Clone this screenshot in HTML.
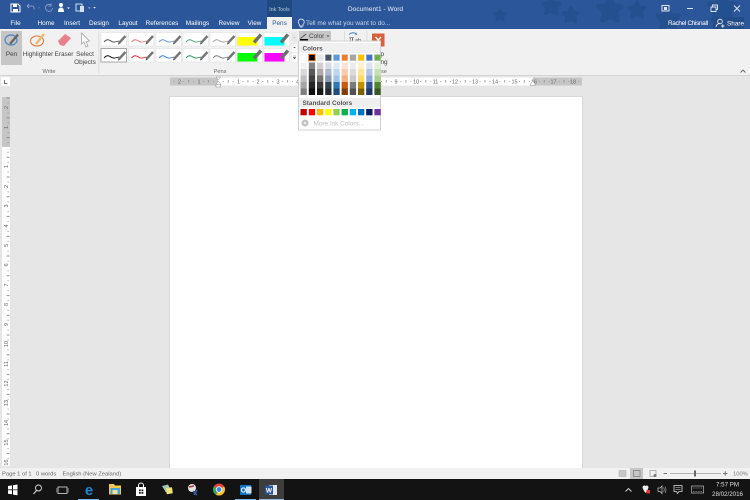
<!DOCTYPE html>
<html><head><meta charset="utf-8"><title>Document1 - Word</title>
<style>
html,body{margin:0;padding:0;width:750px;height:500px;overflow:hidden;background:#e6e6e6}
svg{display:block;position:absolute;left:0;top:0;filter:blur(.35px)}
text{font-family:"Liberation Sans",sans-serif;font-size:6.4px;fill:#444}
.w text,text.w{fill:#fff}
.c{text-anchor:middle}
.r text{font-size:5.5px;fill:#666;text-anchor:middle}
</style></head><body>
<svg width="750" height="500" viewBox="0 0 750 500" xmlns="http://www.w3.org/2000/svg">
<defs>
<g id="nib"><path d="M18 10.5L24.5 3.5" stroke="#767676" stroke-width="2.4" fill="none"/><path d="M17 12l.6-2 1.3 1.2z" fill="#444"/></g>
<path id="wave" d="M3 9.5q3-3.5 6-1.500t5 1.500 4-1" fill="none" stroke-width=".9"/>
<pattern id="ticks" x="218" y="77" width="19.75" height="9" patternUnits="userSpaceOnUse">
<rect x="4.9" y="4" width=".8" height=".9" fill="#888"/><rect x="9.8" y="3" width=".8" height="2.6" fill="#888"/><rect x="14.8" y="4" width=".8" height=".9" fill="#888"/>
</pattern>
<pattern id="vticks" x="2" y="147" width="8" height="19.75" patternUnits="userSpaceOnUse">
<rect x="5.6" y="4.9" width="1" height=".9" fill="#888"/><rect x="4.6" y="9.8" width="3" height=".9" fill="#888"/><rect x="5.6" y="14.8" width="1" height=".9" fill="#888"/>
</pattern>
<path id="star" d="M0-10L3-3.5 10-3 5 2 6.500 9 0 5.500-6.500 9-5 2-10-3-3-3.500Z" fill="#24508f" stroke="#24508f" stroke-width="4" stroke-linejoin="round"/>
</defs>

<!-- title bar -->
<rect width="750" height="29" fill="#2b579a"/>
<use href="#star" transform="translate(500 15) scale(.55)"/>
<use href="#star" transform="translate(551 6) scale(.85)"/>
<use href="#star" transform="translate(571 15) scale(.75)"/>
<use href="#star" transform="translate(610 10) scale(1.15)"/>
<use href="#star" transform="translate(637 10) scale(.8)"/>
<use href="#star" transform="translate(668 19) scale(1.05)"/>
<use href="#star" transform="translate(722 8) scale(1.3)"/>
<rect x="267" y="0" width="25" height="17" fill="#1f4a80"/>
<text x="279.500" y="11" class="c" style="font-size:5.2px;fill:#b9c9de">Ink Tools</text>
<!-- QAT -->
<path d="M11 4h7l2 2v6h-9z" fill="none" stroke="#fff" stroke-width="1"/><rect x="13" y="4.500" width="4" height="2.500" fill="#fff"/><rect x="13" y="9" width="5" height="3" fill="#fff"/>
<path d="M27 6l2-2M27 6l2 2M27 6h5q2.500 0 2 3.500" fill="none" stroke="#7f9ac3" stroke-width="1"/>
<path d="M38 7.500h2l-1 1z" fill="#7f9ac3"/>
<path d="M51 5a3.500 3.500 0 1 0 1.500 3M51 3.500v2.500h-2.500" fill="none" stroke="#7f9ac3" stroke-width="1"/>
<circle cx="61" cy="5" r="2" fill="#fff"/><path d="M58 12q0-4.500 3-4.500t3 4.500z" fill="#fff"/><path d="M67 7.500h3l-1.500 1.500z" fill="#fff"/>
<rect x="76" y="4" width="6" height="7" fill="none" stroke="#d7e0ee"/><rect x="80" y="6" width="4" height="6" fill="#d7e0ee"/><path d="M88 7.500h2.500l-1.200 1.200z" fill="#d7e0ee"/>
<path d="M93 7h3l-1.500 1.500z" fill="#d7e0ee"/>
<text x="375.500" y="11" class="c" style="font-size:6.600px;fill:#e8eef6">Document1 - Word</text>
<!-- window buttons -->
<rect x="662" y="5.500" width="7" height="5.500" fill="none" stroke="#dfe6f0"/><rect x="664" y="7" width="3" height="3" fill="#dfe6f0"/>
<rect x="687" y="8" width="6" height="1" fill="#dfe6f0"/>
<path d="M711 7h5v4.500h-5zM712.500 6.500v-1.500h5v4.500h-1.500" fill="none" stroke="#dfe6f0" stroke-width=".9"/>
<path d="M734 5.500l6 6M740 5.500l-6 6" stroke="#dfe6f0" stroke-width=".9"/>
<!-- tabs -->
<g class="w">
<text x="15.500" y="25.200" class="c">File</text>
<text x="46" y="25.200" class="c">Home</text>
<text x="72" y="25.200" class="c">Insert</text>
<text x="99" y="25.200" class="c">Design</text>
<text x="128" y="25.200" class="c">Layout</text>
<text x="162" y="25.200" class="c">References</text>
<text x="197.500" y="25.200" class="c">Mailings</text>
<text x="229" y="25.200" class="c">Review</text>
<text x="254.500" y="25.200" class="c">View</text>
<text x="306" y="25.200" style="fill:#c7d4e6">Tell me what you want to do...</text>
<text x="668" y="25.200" textLength="40">Rachel Chisnall</text>
</g>
<rect x="267" y="17" width="25" height="12" fill="#f1f1f1"/>
<text x="279.500" y="25.200" class="c" style="fill:#2b579a">Pens</text>
<path d="M299.500 24.500a3 3 0 1 1 3.500 0v1.500h-3.500zM300 27h2.500" fill="none" stroke="#e2e9f3" stroke-width=".8"/>
<rect x="713" y="17" width="31" height="12" fill="#234c88"/>
<circle cx="720" cy="21.500" r="2.300" fill="none" stroke="#fff" stroke-width=".8"/><path d="M716 27q.5-3.500 4-3.500M721 26h3.500M722.800 24.300v3.500" fill="none" stroke="#fff" stroke-width=".8"/>
<text x="727" y="25.500" class="w">Share</text>

<!-- ribbon -->
<rect y="29" width="750" height="46" fill="#f1f1f1"/>
<rect y="75" width="750" height="1" fill="#d4d4d4"/>
<rect x="1" y="31" width="21" height="34" fill="#c6c6c6"/>
<ellipse cx="11" cy="40" rx="6" ry="5" fill="none" stroke="#4f83bd" stroke-width="1.200"/>
<path d="M10 44L18 34.500" stroke="#666" stroke-width="2.400"/>
<text x="11.500" y="56" class="c">Pen</text>
<ellipse cx="37" cy="41" rx="6.500" ry="5" fill="none" stroke="#e5763c" stroke-width="1.100"/>
<path d="M36 44L44 34" stroke="#f0b878" stroke-width="2.600"/>
<text x="38" y="56" class="c">Highlighter</text>
<path d="M58 41l7-7 6 4-7 8-4-1z" fill="#ea7f8e"/><path d="M59 34h.1" stroke="#f3c766" stroke-width="2.500"/>
<text x="64" y="56" class="c">Eraser</text>
<path d="M81.500 33L81.500 44l2.500-2 2 5 2-1-2-4.500 3.500-.5z" fill="#fff" stroke="#9a9a9a" stroke-width=".7"/>
<text x="85" y="56" class="c">Select</text>
<text x="85" y="64" class="c">Objects</text>
<text x="49" y="73" class="c" style="font-size:5.600px;fill:#666">Write</text>
<rect x="98.500" y="31" width=".8" height="42" fill="#d8d8d8"/>
<text x="220" y="73" class="c" style="font-size:5.600px;fill:#666">Pens</text>

<!-- pen gallery -->
<g transform="translate(101 32.500)"><rect width="25.500" height="13.500" fill="#fff" stroke="#e2e2e2" stroke-width=".6"/><use href="#wave" stroke="#444"/><use href="#nib"/></g>
<g transform="translate(128.500 32.500)"><rect width="25.500" height="13.500" fill="#fff" stroke="#e2e2e2" stroke-width=".6"/><use href="#wave" stroke="#ec6f73"/><use href="#nib"/></g>
<g transform="translate(156 32.500)"><rect width="25.500" height="13.500" fill="#fff" stroke="#e2e2e2" stroke-width=".6"/><use href="#wave" stroke="#5c94d6"/><use href="#nib"/></g>
<g transform="translate(183 32.500)"><rect width="25.500" height="13.500" fill="#fff" stroke="#e2e2e2" stroke-width=".6"/><use href="#wave" stroke="#4ca172"/><use href="#nib"/></g>
<g transform="translate(210 32.500)"><rect width="25.500" height="13.500" fill="#fff" stroke="#e2e2e2" stroke-width=".6"/><use href="#wave" stroke="#a0a0a0"/><use href="#nib"/></g>
<g transform="translate(237 32.500)"><rect width="25.500" height="13.500" fill="#fff" stroke="#e2e2e2" stroke-width=".6"/><rect x="0.500" y="4.500" width="20" height="8.500" fill="#ffff00"/><path d="M17 10L24 2" stroke="#6e6e6e" stroke-width="3.400"/></g>
<g transform="translate(264 32.500)"><rect width="25.500" height="13.500" fill="#fff" stroke="#e2e2e2" stroke-width=".6"/><rect x="0.500" y="4.500" width="20" height="8.500" fill="#00ffff"/><path d="M17 10L24 2" stroke="#6e6e6e" stroke-width="3.400"/></g>

<g transform="translate(101 48.500)"><rect width="25.500" height="13.500" fill="#fff" stroke="#a8a8a8" stroke-width="1"/><use href="#wave" stroke="#000" stroke-width="1.200"/><use href="#nib"/></g>
<g transform="translate(128.500 48.500)"><rect width="25.500" height="13.500" fill="#fff" stroke="#e2e2e2" stroke-width=".6"/><use href="#wave" stroke="#e8222c" stroke-width="1.200"/><use href="#nib"/></g>
<g transform="translate(156 48.500)"><rect width="25.500" height="13.500" fill="#fff" stroke="#e2e2e2" stroke-width=".6"/><use href="#wave" stroke="#3a78cc" stroke-width="1.200"/><use href="#nib"/></g>
<g transform="translate(183 48.500)"><rect width="25.500" height="13.500" fill="#fff" stroke="#e2e2e2" stroke-width=".6"/><use href="#wave" stroke="#1b8a4c" stroke-width="1.200"/><use href="#nib"/></g>
<g transform="translate(210 48.500)"><rect width="25.500" height="13.500" fill="#fff" stroke="#e2e2e2" stroke-width=".6"/><use href="#wave" stroke="#777" stroke-width="1.200"/><use href="#nib"/></g>
<g transform="translate(237 48.500)"><rect width="25.500" height="13.500" fill="#fff" stroke="#e2e2e2" stroke-width=".6"/><rect x="0.500" y="4.500" width="20" height="8.500" fill="#00ff00"/><path d="M17 10L24 2" stroke="#6e6e6e" stroke-width="3.400"/></g>
<g transform="translate(264 48.500)"><rect width="25.500" height="13.500" fill="#fff" stroke="#e2e2e2" stroke-width=".6"/><rect x="0.500" y="4.500" width="20" height="8.500" fill="#ff00ff"/><path d="M17 10L24 2" stroke="#6e6e6e" stroke-width="3.400"/></g>
<!-- gallery scroll -->
<rect x="291.500" y="32.500" width="6" height="10" fill="#e8e8e8"/><path d="M293.200 37.800l1.300-1.300 1.300 1.300z" fill="#c0c0c0"/>
<rect x="291.500" y="43.500" width="6" height="9" fill="#fff" stroke="#e0e0e0" stroke-width=".4"/><path d="M293.200 47l1.300 1.300 1.300-1.300z" fill="#555"/>
<rect x="291.500" y="53" width="6" height="9" fill="#fff" stroke="#e0e0e0" stroke-width=".4"/><path d="M293 57.500l1.500 1.500 1.500-1.500zM293 56h3" fill="#555" stroke="#555" stroke-width=".4"/>
<!-- right groups -->
<rect x="344" y="31" width=".8" height="42" fill="#d8d8d8"/>
<rect x="366.500" y="31" width=".8" height="42" fill="#d8d8d8"/>
<text x="349" y="42.500" style="font-family:'Liberation Serif',serif;font-size:10px;fill:#444">π</text>
<path d="M349 34.500q4-3.500 8 0M357 34.500l-1.500-.3.700-1.500" fill="none" stroke="#4f83bd" stroke-width=".9"/>
<text x="355" y="42" style="font-size:5.500px;fill:#444">ab</text>
<rect x="372" y="33.500" width="12.500" height="13" fill="#d9603c"/>
<path d="M375.500 37l5.500 6M381 37l-5.500 6" stroke="#fff" stroke-width="1.300"/>
<text x="380.500" y="56">p</text>
<text x="380.500" y="64">ng</text>
<text x="381" y="73" style="font-size:5.600px;fill:#666">se</text>
<path d="M740.500 72.500l2.500-2.500 2.500 2.500" fill="none" stroke="#666" stroke-width=".9"/>

<!-- ruler -->
<rect x="1" y="77" width="9" height="9" fill="#fff"/>
<path d="M4.500 80v3.500h3" fill="none" stroke="#777" stroke-width="1.100"/>
<rect x="170" y="77.500" width="412" height="8" fill="#fff"/>
<rect x="170" y="77.500" width="48" height="8" fill="#c6c6c6"/>
<rect x="533" y="77.500" width="49" height="8" fill="#c6c6c6"/>
<rect x="170" y="77" width="412" height="9" fill="url(#ticks)"/>
<g class="r">
<text x="179.500" y="83.500">2</text><text x="199" y="83.500">1</text>
<text x="238.500" y="83.500">1</text><text x="258" y="83.500">2</text><text x="278" y="83.500">3</text><text x="297.500" y="83.500">4</text>
<text x="317" y="83.500">5</text><text x="337" y="83.500">6</text><text x="356.500" y="83.500">7</text><text x="376" y="83.500">8</text>
<text x="396" y="83.500">9</text><text x="416" y="83.500">10</text><text x="435.500" y="83.500">11</text><text x="455" y="83.500">12</text><text x="475" y="83.500">13</text>
<text x="495" y="83.500">14</text><text x="514.500" y="83.500">15</text><text x="534" y="83.500">16</text><text x="553.500" y="83.500">17</text><text x="573" y="83.500">18</text>
</g>
<path d="M216 77h4.500l-2.250 3zM216 84l2.250-3 2.250 3v2.500h-4.500z" fill="#fff" stroke="#8a8a8a" stroke-width=".5"/>
<rect x="216" y="84.500" width="4.500" height="2.500" fill="#fff" stroke="#8a8a8a" stroke-width=".5"/>
<path d="M530.500 84l2.250-3 2.250 3v1.500h-4.500z" fill="#fff" stroke="#8a8a8a" stroke-width=".5"/>
<!-- vertical ruler -->
<rect x="2" y="97" width="8" height="369" fill="#fff"/>
<rect x="2" y="97" width="8" height="50" fill="#c6c6c6"/>
<rect x="2" y="97" width="8" height="369" fill="url(#vticks)"/>
<g class="r">
<text transform="translate(8 107.500) rotate(-90)">2</text><text transform="translate(8 127.500) rotate(-90)">1</text>
<text transform="translate(8 166.500) rotate(-90)">1</text><text transform="translate(8 186.500) rotate(-90)">2</text><text transform="translate(8 206) rotate(-90)">3</text>
<text transform="translate(8 226) rotate(-90)">4</text><text transform="translate(8 245.500) rotate(-90)">5</text><text transform="translate(8 265) rotate(-90)">6</text>
<text transform="translate(8 285) rotate(-90)">7</text><text transform="translate(8 304.500) rotate(-90)">8</text><text transform="translate(8 324.500) rotate(-90)">9</text>
<text transform="translate(8 344) rotate(-90)">10</text><text transform="translate(8 364) rotate(-90)">11</text><text transform="translate(8 383.500) rotate(-90)">12</text>
<text transform="translate(8 403) rotate(-90)">13</text><text transform="translate(8 423) rotate(-90)">14</text><text transform="translate(8 442.500) rotate(-90)">15</text><text transform="translate(8 462.500) rotate(-90)">16</text>
</g>

<!-- page -->
<rect x="169" y="96" width="414" height="372" fill="#d9d9d9"/>
<rect x="170" y="97" width="412" height="371" fill="#fff"/>

<!-- status bar -->
<rect y="468" width="750" height="11" fill="#f1f1f1"/>
<text x="2" y="475.500" style="font-size:5.800px;fill:#666">Page 1 of 1</text>
<text x="36" y="475.500" style="font-size:5.800px;fill:#666">0 words</text>
<text x="62.500" y="475.500" style="font-size:5.800px;fill:#666">English (New Zealand)</text>
<rect x="630" y="468" width="13" height="11" fill="#c6c6c6"/>
<rect x="619" y="470.500" width="7" height="6" fill="#c8c8c8" stroke="#aaa" stroke-width=".5"/>
<rect x="633.500" y="470.500" width="6.500" height="6" fill="none" stroke="#777" stroke-width=".7"/>
<rect x="650" y="470.500" width="6" height="6" fill="none" stroke="#999" stroke-width=".7"/><circle cx="655" cy="475.500" r="1.500" fill="#777"/>
<rect x="663.500" y="473" width="3.500" height=".9" fill="#666"/>
<rect x="670" y="473" width="51" height=".7" fill="#999"/>
<rect x="694" y="470.500" width="2" height="6" fill="#666"/>
<path d="M723 473.400h4.500M725.250 471.200v4.500" stroke="#666" stroke-width=".9"/>
<text x="733" y="475.500" style="font-size:5.800px;fill:#777">100%</text>

<!-- taskbar -->
<rect y="479" width="750" height="21" fill="#131313"/>
<path d="M8 486l4-.6v4h-4zM13 485.200l4.500-.7v5h-4.500zM8 490.300h4v4l-4-.6zM13 490.300h4.500v5l-4.500-.7z" fill="#fff"/>
<circle cx="38.500" cy="488" r="3" fill="none" stroke="#ddd" stroke-width=".9"/><path d="M36.500 490.500L33.500 494" stroke="#ddd"/>
<rect x="58" y="487" width="9" height="6.500" fill="none" stroke="#ddd" stroke-width=".8"/><path d="M56.800 488v4.500M68.200 488v4.500" stroke="#888" stroke-width=".8"/>
<text x="89" y="495" class="c" style="font-size:15px;font-weight:bold;fill:#1a86d8">e</text>
<rect x="78" y="499" width="21" height="1" fill="#7fb4e6"/>
<path d="M109 484h5l1 1.500h6v9h-12z" fill="#f2c94e"/><rect x="110.500" y="488" width="9.500" height="6" fill="#4aa3d8"/><rect x="112.500" y="490" width="5" height="4" fill="#f6e39a"/>
<path d="M136 487h10v9h-10z" fill="#fff"/><path d="M138.500 487v-1.500a2.500 2.500 0 0 1 5 0v1.500" fill="none" stroke="#fff"/>
<path d="M139 489.500h1.800v1.800H139zM141.500 489.500h1.800v1.800h-1.800zM139 492h1.800v1.800H139zM141.500 492h1.800v1.800h-1.800z" fill="#222"/>
<path d="M162 486l6-1.500 3 6-5 2z" fill="#9fc5b8"/><path d="M166 488l6-.8.800 6-6 1z" fill="#f1e27a"/>
<circle cx="192" cy="488" r="4" fill="#e4e4e4"/><path d="M189 487l5-1" stroke="#b3303a" stroke-width="1.600"/><path d="M193 491l4 4M197 490l-3 5" stroke="#3a63a8" stroke-width="1.400"/>
<circle cx="219" cy="489.500" r="6" fill="#e0453a"/><path d="M219 489.500L224.200 486.500A6 6 0 0 1 216 494.700z" fill="#f6c52d"/><path d="M219 489.500L216 494.700A6 6 0 0 1 213.800 486.500z" fill="#33a852"/><circle cx="219" cy="489.500" r="3.200" fill="#fff"/><circle cx="219" cy="489.500" r="2.400" fill="#4186ee"/>
<rect x="240" y="485" width="11" height="10" fill="#0f72c6"/><rect x="246" y="486.500" width="5.500" height="7" fill="#cfe3f5"/><text x="243.500" y="492.500" class="c" style="font-size:7px;font-weight:bold;fill:#fff">O</text>
<rect x="235" y="499" width="21" height="1" fill="#7fb4e6"/>
<rect x="259" y="479" width="25" height="21" fill="#3d3d3d"/>
<rect x="259" y="499" width="25" height="1" fill="#8ebce8"/>
<rect x="269" y="485" width="8" height="10" fill="#dfe8f3"/><rect x="265" y="485.500" width="8" height="9" fill="#2b579a"/><text x="269" y="492.500" class="c" style="font-size:6.500px;font-weight:bold;fill:#fff">W</text>
<!-- tray -->
<path d="M625.500 491.500l3-3 3 3" fill="none" stroke="#ddd" stroke-width=".9"/>
<path d="M642.500 487a1.800 1.800 0 0 1 3-1 1.800 1.800 0 0 1 3 1q0 2-3 6-3-4-3-6z" fill="#eee"/><rect x="646.500" y="490" width="3.500" height="3.500" fill="#e03a30"/>
<path d="M658 488h2l2-2v7.500l-2-2h-2z" fill="none" stroke="#bbb" stroke-width=".8"/><path d="M663.500 487.500q1.500 2.200 0 4.500M665 486.500q2 3.200 0 6.500" fill="none" stroke="#999" stroke-width=".7"/>
<path d="M674 485.500h8v6h-3l-1.500 2-1-2h-2.500z" fill="none" stroke="#ddd" stroke-width=".8"/><path d="M675.500 487.500h5M675.500 489.500h5" stroke="#ddd" stroke-width=".5"/>
<rect x="691.500" y="486" width="12" height="7" fill="none" stroke="#bbb" stroke-width=".7"/><path d="M693 491.500h9M693 488h9" stroke="#888" stroke-width=".7" stroke-dasharray="1 .6"/>
<text x="727.500" y="486.500" class="c" style="font-size:6.200px;fill:#ddd">7:57 PM</text>
<text x="727.500" y="496" class="c" style="font-size:6.200px;fill:#ddd">28/02/2016</text>

<!-- colour dropdown button -->
<rect x="299" y="31" width="32" height="10" fill="#c6c6c6"/>
<path d="M300.500 38.500l5.500-4.500" stroke="#555" stroke-width="1"/><rect x="300" y="39" width="8" height="1.800" fill="#000"/>
<text x="309" y="38.200">Color</text>
<path d="M326.500 35.500h3l-1.500 1.500z" fill="#444"/>

<!-- colour menu -->
<rect x="298" y="40.500" width="83" height="90" fill="#d0d0d0"/>
<rect x="299" y="41.500" width="81" height="88" fill="#fff"/>
<rect x="299" y="43" width="81" height="10" fill="#f0f0f0"/>
<rect x="299" y="98" width="81" height="9.500" fill="#f0f0f0"/>
<text x="302.500" y="50.300" style="font-weight:bold;fill:#555">Colors</text>
<text x="302.500" y="105" style="font-weight:bold;fill:#555">Standard Colors</text>
<g stroke="#e4e4e4" stroke-width=".3">
<rect x="300.500" y="54.500" width="6.300" height="6.300" fill="#ffffff"/>
<rect x="317" y="54.500" width="6.300" height="6.300" fill="#e7e6e6"/>
<rect x="325.200" y="54.500" width="6.300" height="6.300" fill="#44546a"/>
<rect x="333.400" y="54.500" width="6.300" height="6.300" fill="#5b9bd5"/>
<rect x="341.600" y="54.500" width="6.300" height="6.300" fill="#ed7d31"/>
<rect x="349.800" y="54.500" width="6.300" height="6.300" fill="#a5a5a5"/>
<rect x="358" y="54.500" width="6.300" height="6.300" fill="#ffc000"/>
<rect x="366.200" y="54.500" width="6.300" height="6.300" fill="#4472c4"/>
<rect x="374.400" y="54.500" width="6.300" height="6.300" fill="#70ad47"/>
</g>
<rect x="308.700" y="54.300" width="6.500" height="6.500" fill="#000" stroke="#ed7d31" stroke-width="1"/>
<g>
<rect x="300.500" y="62.500" width="6.300" height="6.500" fill="#f2f2f2"/><rect x="300.500" y="69" width="6.300" height="6.500" fill="#d9d9d9"/><rect x="300.500" y="75.500" width="6.300" height="6.500" fill="#bfbfbf"/><rect x="300.500" y="82" width="6.300" height="6.500" fill="#a6a6a6"/><rect x="300.500" y="88.500" width="6.300" height="6.500" fill="#808080"/>
<rect x="308.800" y="62.500" width="6.300" height="6.500" fill="#808080"/><rect x="308.800" y="69" width="6.300" height="6.500" fill="#595959"/><rect x="308.800" y="75.500" width="6.300" height="6.500" fill="#404040"/><rect x="308.800" y="82" width="6.300" height="6.500" fill="#262626"/><rect x="308.800" y="88.500" width="6.300" height="6.500" fill="#0d0d0d"/>
<rect x="317" y="62.500" width="6.300" height="6.500" fill="#d0cece"/><rect x="317" y="69" width="6.300" height="6.500" fill="#afabab"/><rect x="317" y="75.500" width="6.300" height="6.500" fill="#767171"/><rect x="317" y="82" width="6.300" height="6.500" fill="#3a3838"/><rect x="317" y="88.500" width="6.300" height="6.500" fill="#171616"/>
<rect x="325.200" y="62.500" width="6.300" height="6.500" fill="#d6dce4"/><rect x="325.200" y="69" width="6.300" height="6.500" fill="#adb9ca"/><rect x="325.200" y="75.500" width="6.300" height="6.500" fill="#8496b0"/><rect x="325.200" y="82" width="6.300" height="6.500" fill="#333f4f"/><rect x="325.200" y="88.500" width="6.300" height="6.500" fill="#222a35"/>
<rect x="333.400" y="62.500" width="6.300" height="6.500" fill="#deeaf6"/><rect x="333.400" y="69" width="6.300" height="6.500" fill="#bdd7ee"/><rect x="333.400" y="75.500" width="6.300" height="6.500" fill="#9dc3e6"/><rect x="333.400" y="82" width="6.300" height="6.500" fill="#2e75b5"/><rect x="333.400" y="88.500" width="6.300" height="6.500" fill="#1f4e79"/>
<rect x="341.600" y="62.500" width="6.300" height="6.500" fill="#fbe4d5"/><rect x="341.600" y="69" width="6.300" height="6.500" fill="#f7cbac"/><rect x="341.600" y="75.500" width="6.300" height="6.500" fill="#f4b183"/><rect x="341.600" y="82" width="6.300" height="6.500" fill="#c55a11"/><rect x="341.600" y="88.500" width="6.300" height="6.500" fill="#833c0b"/>
<rect x="349.800" y="62.500" width="6.300" height="6.500" fill="#ededed"/><rect x="349.800" y="69" width="6.300" height="6.500" fill="#dbdbdb"/><rect x="349.800" y="75.500" width="6.300" height="6.500" fill="#c9c9c9"/><rect x="349.800" y="82" width="6.300" height="6.500" fill="#7b7b7b"/><rect x="349.800" y="88.500" width="6.300" height="6.500" fill="#525252"/>
<rect x="358" y="62.500" width="6.300" height="6.500" fill="#fff2cc"/><rect x="358" y="69" width="6.300" height="6.500" fill="#fee599"/><rect x="358" y="75.500" width="6.300" height="6.500" fill="#ffd965"/><rect x="358" y="82" width="6.300" height="6.500" fill="#bf9000"/><rect x="358" y="88.500" width="6.300" height="6.500" fill="#7f6000"/>
<rect x="366.200" y="62.500" width="6.300" height="6.500" fill="#dae2f3"/><rect x="366.200" y="69" width="6.300" height="6.500" fill="#b4c6e7"/><rect x="366.200" y="75.500" width="6.300" height="6.500" fill="#8eaadb"/><rect x="366.200" y="82" width="6.300" height="6.500" fill="#2f5496"/><rect x="366.200" y="88.500" width="6.300" height="6.500" fill="#1f3864"/>
<rect x="374.400" y="62.500" width="6.300" height="6.500" fill="#e2efd9"/><rect x="374.400" y="69" width="6.300" height="6.500" fill="#c5e0b3"/><rect x="374.400" y="75.500" width="6.300" height="6.500" fill="#a8d08d"/><rect x="374.400" y="82" width="6.300" height="6.500" fill="#538135"/><rect x="374.400" y="88.500" width="6.300" height="6.500" fill="#375623"/>
</g>
<g>
<rect x="300.500" y="109" width="6.300" height="6.300" fill="#c00000"/><rect x="308.800" y="109" width="6.300" height="6.300" fill="#ff0000"/><rect x="317" y="109" width="6.300" height="6.300" fill="#ffc000"/><rect x="325.200" y="109" width="6.300" height="6.300" fill="#ffff00"/><rect x="333.400" y="109" width="6.300" height="6.300" fill="#92d050"/><rect x="341.600" y="109" width="6.300" height="6.300" fill="#00b050"/><rect x="349.800" y="109" width="6.300" height="6.300" fill="#00b0f0"/><rect x="358" y="109" width="6.300" height="6.300" fill="#0070c0"/><rect x="366.200" y="109" width="6.300" height="6.300" fill="#002060"/><rect x="374.400" y="109" width="6.300" height="6.300" fill="#7030a0"/>
</g>
<circle cx="305" cy="123" r="3.500" fill="#c4c4c4"/><circle cx="305" cy="123" r="1.200" fill="#eee"/>
<text x="313.500" y="125.500" style="fill:#bcbcbc">More Ink Colors...</text>
</svg>
</body></html>
